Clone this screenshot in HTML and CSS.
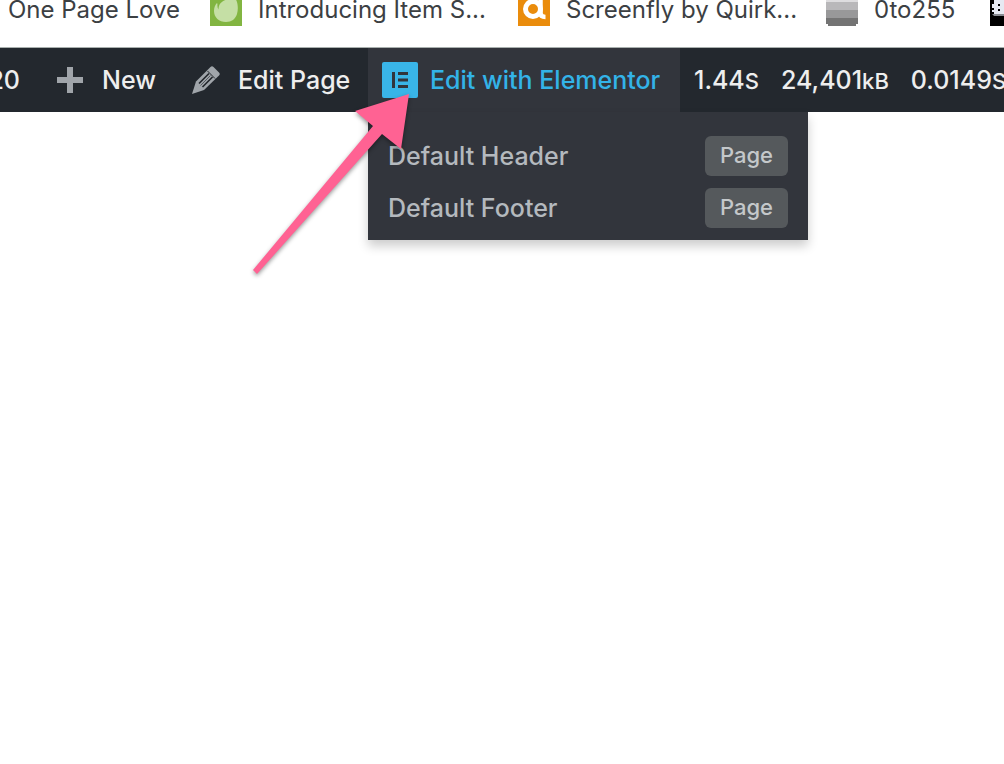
FILE: index.html
```html
<!DOCTYPE html>
<html lang="en">
<head>
<meta charset="utf-8">
<meta name="viewport" content="width=device-width, initial-scale=1">
<title>Edit with Elementor</title>
<link rel="stylesheet" href="styles.css">
</head>
<body>
<nav class="bookmarks" aria-label="Bookmarks">
  <a class="bookmark bookmark-first" href="#">One Page Love</a>
  <a class="bookmark bookmark-wide" href="#">
    <svg class="favicon" viewBox="0 0 32 32" aria-hidden="true"><rect width="32" height="32" fill="#82b541"/><path d="M25 4C28 8 28.500 15 27 20C25.500 25 21.500 28 16 28C9 28 4 23.500 4 17C4 14 5 11 6.500 9.500C7 9 7.500 9.500 7.500 10C7.200 12 7.500 14 8.500 15.500C8.500 9 13 5 25 4Z" fill="#c5dfa5"/></svg>
    <span>Introducing Item S...</span>
  </a>
  <a class="bookmark bookmark-wide" href="#">
    <svg class="favicon" viewBox="0 0 32 32" aria-hidden="true"><rect width="32" height="32" fill="#ea8c0c"/><g fill="none" stroke="#fff" stroke-width="5"><circle cx="15" cy="15" r="7.500"/><path d="M22.500 6V19Q22.500 23 27.500 23" stroke-width="4.500"/></g></svg>
    <span>Screenfly by Quirk...</span>
  </a>
  <a class="bookmark bookmark-short" href="#">
    <svg class="favicon" viewBox="0 0 32 32" aria-hidden="true"><path fill="#dedddf" d="M0 0h32v8H0z"/><path fill="#b9b8ba" d="M0 8h32v8H0z"/><path fill="#989899" d="M0 16h32v8H0z"/><path fill="#747474" d="M0 24h32v6h-2v2H2v-2H0z"/></svg>
    <span>0to255</span>
  </a>
  <a class="bookmark" href="#" aria-label="Bookmark">
    <svg class="favicon" viewBox="0 0 32 32" aria-hidden="true"><path d="M0 0h32v32H0z"/><path fill="#e6e9f2" d="M4 6h28v14H4V18H2V16h2v-2H2v-4h2z"/><path fill="#888b91" d="M2 20h30v2H4z"/><path d="M8 10h2v2H8zM8 15h2v2H8z"/></svg>
  </a>
</nav>
<header class="adminbar">
  <a class="item item-count" href="#">20</a>
  <a class="item item-new" href="#">
    <svg class="icon" viewBox="0 0 28 28" aria-hidden="true"><path fill="#a0a5aa" d="M11 1h6v10h10v6H17v10h-6V17H1v-6h10z"/></svg>
    <span>New</span>
  </a>
  <a class="item item-edit" href="#">
    <svg class="icon" viewBox="0 0 28 28" aria-hidden="true"><path fill="#a0a5aa" d="M18.500 1Q20-.5 21.500 1L27 6.500Q28.500 8 27 9.500L12 24L0 28L4 15.500Z"/><g stroke="#23282d" fill="none"><path d="M7 17.500L17 7.500M10.500 21L20.500 11" stroke-width="1.600"/><path d="M8.500 19.500L18.500 9.500" stroke-width="0.600"/><path d="M15.500 5L23 12.500" stroke-width="1"/></g></svg>
    <span>Edit Page</span>
  </a>
  <div class="elementor">
    <a class="item item-elementor" href="#">
      <svg class="elementor-icon" viewBox="0 0 36 36" aria-hidden="true"><rect width="36" height="36" rx="2" fill="#39b5e8"/><path fill="#32353c" d="M10 10h3v16h-3zM16 10h10v3H16zM16 16.500h10v3H16zM16 23h10v3H16z"/></svg>
      <span>Edit with Elementor</span>
    </a>
    <div class="submenu">
      <a class="subitem" href="#"><span>Default Header</span><span class="badge">Page</span></a>
      <a class="subitem" href="#"><span>Default Footer</span><span class="badge">Page</span></a>
    </div>
  </div>
  <a class="item stats" href="#">
    <span>1.44<small>S</small></span>
    <span>24,401<small>kB</small></span>
    <span>0.0149<small>S</small></span>
  </a>
</header>
<svg class="arrow" viewBox="0 0 180 200" aria-hidden="true"><path fill="#ff6293" d="M169 4L115 21L133 36L13 180L17 184L142 44L161 59Z"/></svg>
</body>
</html>
```
FILE: styles.css
```css
* {
  box-sizing: border-box;
}

body {
  min-height: 100vh;
  margin: 0;
  overflow-x: hidden;
  background: #fff;
  font-family: Inter, "Open Sans", sans-serif;
}

a {
  color: inherit;
  text-decoration: none;
}

.bookmarks {
  display: flex;
  align-items: flex-start;
  height: 48px;
  padding-left: 8px;
  border-bottom: 1px solid #a9b0ae;
  color: #3c4043;
  font-size: 24px;
  line-height: 20px;
}

.bookmark {
  display: flex;
  flex: none;
  gap: 16px;
  white-space: nowrap;
}

.bookmark-first {
  width: 202px;
}

.bookmark-wide {
  width: 308px;
}

.bookmark-short {
  width: 164px;
}

.favicon {
  flex: none;
  width: 32px;
  height: 32px;
  margin-top: -6px;
}

.adminbar {
  display: flex;
  height: 64px;
  background: #23282e;
  color: #eee;
  font-size: 25px;
  font-weight: 500;
  line-height: 64px;
  white-space: nowrap;
}

.item {
  display: flex;
  flex: none;
  align-items: center;
}

.item-count {
  justify-content: flex-end;
  width: 20px;
  margin-right: 36px;
}

.item-new {
  gap: 18px;
  width: 136px;
}

.item-edit {
  gap: 18px;
  width: 176px;
}

.icon {
  flex: none;
  width: 28px;
  height: 28px;
}

.elementor {
  position: relative;
  flex: none;
  width: 312px;
  background: #32353c;
  color: #33b3e8;
}

.item-elementor {
  gap: 12px;
  padding-left: 14px;
}

.elementor-icon {
  flex: none;
  width: 36px;
  height: 36px;
}

.submenu {
  position: absolute;
  top: 100%;
  left: 0;
  display: flex;
  flex-direction: column;
  width: 440px;
  padding: 18px 20px 6px;
  background: #32353c;
  box-shadow: 0 6px 10px rgba(0, 0, 0, 0.2);
  color: #b4b9be;
}

.subitem {
  display: flex;
  align-items: center;
  justify-content: space-between;
  height: 52px;
}

.badge {
  height: 40px;
  padding: 0 15px;
  border-radius: 6px;
  background: #55595c;
  color: #c4c8ca;
  font-size: 22px;
  line-height: 38px;
}

.stats {
  gap: 22px;
  padding-left: 14px;
}

.stats small {
  font-size: 22px;
}

.arrow {
  position: absolute;
  top: 90px;
  left: 240px;
  width: 180px;
  height: 200px;
  filter: drop-shadow(0 2px 2px rgba(0, 0, 0, 0.4));
  pointer-events: none;
}
```
